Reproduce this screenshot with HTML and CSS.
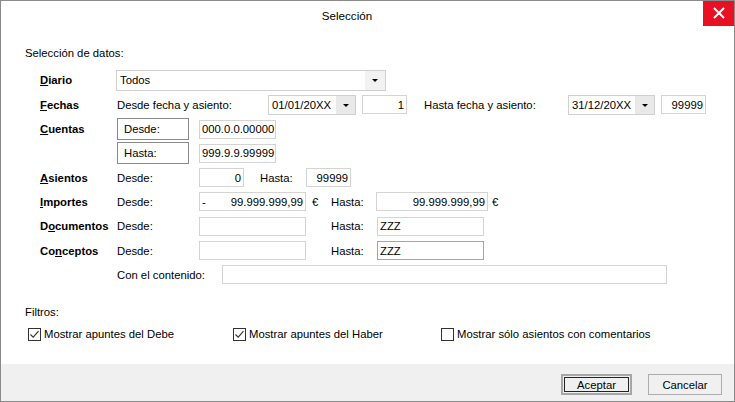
FILE: index.html
```html
<!DOCTYPE html>
<html lang="es">
<head>
<meta charset="utf-8">
<title>Selección</title>
<link rel="stylesheet" href="styles.css">
</head>
<body>
<div class="win">
  <div class="titlebar">
    <div class="title">Selección</div>
    <div class="close">
      <svg width="31" height="25" viewBox="0 0 31 25"><path d="M11 7 L21 17 M21 7 L11 17" stroke="#fff" stroke-width="2" fill="none"/></svg>
    </div>
  </div>
  <div class="content">
    <div class="heading">Selección de datos:</div>
    <div class="form">
      <div class="row">
        <span class="lbl"><u>D</u>iario</span>
        <div class="combo w-diario"><span class="val">Todos</span><span class="drop light"><i class="tri"></i></span></div>
      </div>
      <div class="row">
        <span class="lbl"><u>F</u>echas</span>
        <span class="txt w-fdesde">Desde fecha y asiento:</span>
        <div class="combo w-date1"><span class="val">01/01/20XX</span><span class="drop"><i class="tri"></i></span></div>
        <div class="inp num w-num ml6">1</div>
        <span class="txt w-fhasta ml17">Hasta fecha y asiento:</span>
        <div class="combo w-date2"><span class="val">31/12/20XX</span><span class="drop"><i class="tri"></i></span></div>
        <div class="inp num w-num ml6">99999</div>
      </div>
      <div class="row">
        <span class="lbl"><u>C</u>uentas</span>
        <div class="frame">Desde:</div>
        <div class="inp w-cta">000.0.0.00000</div>
      </div>
      <div class="row">
        <span class="lbl"></span>
        <div class="frame">Hasta:</div>
        <div class="inp w-cta">999.9.9.99999</div>
      </div>
      <div class="row">
        <span class="lbl"><u>A</u>sientos</span>
        <span class="txt w-desde">Desde:</span>
        <div class="inp num w-num">0</div>
        <span class="txt w-ahasta">Hasta:</span>
        <div class="inp num w-num">99999</div>
      </div>
      <div class="row">
        <span class="lbl"><u>I</u>mportes</span>
        <span class="txt w-desde">Desde:</span>
        <div class="inp num w-imp split"><span>-</span><span>99.999.999,99</span></div>
        <span class="txt w-euro">€</span>
        <span class="txt w-hasta2">Hasta:</span>
        <div class="inp num w-imp2">99.999.999,99</div>
        <span class="txt euro2">€</span>
      </div>
      <div class="row">
        <span class="lbl">D<u>o</u>cumentos</span>
        <span class="txt w-desde">Desde:</span>
        <div class="inp w-doc"></div>
        <span class="txt w-sp">Hasta:</span>
        <div class="inp w-doc">ZZZ</div>
      </div>
      <div class="row">
        <span class="lbl">Co<u>n</u>ceptos</span>
        <span class="txt w-desde">Desde:</span>
        <div class="inp w-doc"></div>
        <span class="txt w-sp">Hasta:</span>
        <div class="inp w-doc dark">ZZZ</div>
      </div>
      <div class="row">
        <span class="lbl"></span>
        <span class="txt w-cont">Con el contenido:</span>
        <div class="inp w-contin"></div>
      </div>
    </div>
    <div class="filtros">Filtros:</div>
    <div class="checks">
      <label class="chk c1"><span class="box"><svg width="11" height="11" viewBox="0 0 11 11"><path d="M1.5 5.5 L4.2 8.2 L9.5 2.2" stroke="#333" stroke-width="1.1" fill="none"/></svg></span>Mostrar apuntes del Debe</label>
      <label class="chk c2"><span class="box"><svg width="11" height="11" viewBox="0 0 11 11"><path d="M1.5 5.5 L4.2 8.2 L9.5 2.2" stroke="#333" stroke-width="1.1" fill="none"/></svg></span>Mostrar apuntes del Haber</label>
      <label class="chk c3"><span class="box"></span>Mostrar sólo asientos con comentarios</label>
    </div>
  </div>
  <div class="footer">
    <div class="btn default"><span class="focus">Aceptar</span></div>
    <div class="btn cancel">Cancelar</div>
  </div>
</div>
</body>
</html>
```

FILE: styles.css
```css
* { box-sizing: border-box; }
html, body { margin: 0; padding: 0; background: #fff; }
body {
  font-family: "Liberation Sans", Arial, sans-serif;
  font-size: 11.3px;
  color: #000;
}
.win {
  width: 735px;
  height: 402px;
  border: 1px solid #8a8a8a;
  display: flex;
  flex-direction: column;
  background: #fff;
  overflow: hidden;
}
.titlebar {
  display: flex;
  height: 33px;
  flex: none;
}
.title {
  flex: 1;
  text-align: center;
  padding-top: 8px;
  line-height: 14px;
  font-size: 11.6px;
  padding-right: 10px;
}
.close {
  width: 31px;
  height: 25px;
  background: #e81123;
  margin-right: 0;
}
.close svg { display: block; }
.content {
  padding-left: 24px;
  flex: 1;
}
.heading {
  margin-top: 12px;
  line-height: 14px;
}
.form {
  margin-top: 8.35px;
  padding-left: 15px;
}
.row {
  display: flex;
  align-items: center;
  height: 24.3px;
}
.lbl {
  width: 76px;
  flex: none;
  font-weight: bold;
}
.lbl u, .lbl { text-decoration-thickness: 1px; }
.txt { flex: none; white-space: nowrap; }
.combo {
  display: flex;
  align-items: stretch;
  border: 1px solid #d0d0d0;
  background: #fff;
  flex: none;
}
.combo .val {
  flex: 1;
  display: flex;
  align-items: center;
  padding-left: 3px;
}
.drop {
  width: 19px;
  background: #e9e9e9;
  display: flex;
  align-items: center;
  justify-content: center;
}
.drop.light { background: #f2f2f2; width: 20px; }
.tri {
  display: block;
  width: 0;
  height: 0;
  border-left: 3px solid transparent;
  border-right: 3px solid transparent;
  border-top: 3px solid #000;
  margin-top: 1px;
}
.w-diario { width: 270px; height: 21px; }
.w-date1 { width: 88px; height: 20px; margin-left: 0; }
.w-date2 { width: 87px; height: 20px; }
.w-fdesde { width: 152px; padding-left: 1px; }
.w-fhasta { width: 144px; }
.ml6 { margin-left: 6px; }
.ml17 { margin-left: 17px; }
.inp {
  flex: none;
  height: 19px;
  border: 1px solid #d4d4d4;
  background: #fff;
  display: flex;
  align-items: center;
  padding: 0 2px;
  white-space: nowrap;
}
.inp.num { justify-content: flex-end; }
.inp.split { justify-content: space-between; }
.inp.dark { border-color: #a5a5a5; }
.w-num { width: 45px; }
.frame {
  flex: none;
  width: 72px;
  height: 22px;
  margin-left: 1px;
  border: 1px solid #8a8a8a;
  display: flex;
  align-items: center;
  padding-left: 6px;
}
.w-cta { width: 77px; margin-left: 10px; }
.w-desde { width: 83px; padding-left: 1px; }
.w-ahasta { width: 46px; margin-left: 16px; }
.w-imp { width: 107px; }
.w-euro { width: 25px; padding-left: 6px; }
.w-hasta2 { width: 45px; }
.w-imp2 { width: 112px; }
.euro2 { margin-left: 4px; }
.w-doc { width: 107px; }
.w-sp { width: 71px; padding-left: 25px; }
.w-cont { width: 106px; padding-left: 1px; }
.w-contin { width: 445px; }
.filtros {
  margin-top: 18px;
  line-height: 14px;
}
.checks {
  display: flex;
  align-items: center;
  height: 16px;
  margin-top: 7px;
  padding-left: 3px;
}
.chk {
  display: flex;
  align-items: center;
  flex: none;
  white-space: nowrap;
}
.c1 { width: 205px; }
.c2 { width: 208px; }
.box {
  width: 13px;
  height: 13px;
  border: 1px solid #333;
  background: #fff;
  margin-right: 3px;
  display: flex;
  align-items: center;
  justify-content: center;
}
.box svg { display: block; }
.footer {
  flex: none;
  height: 37px;
  background: #f0f0f0;
  display: flex;
  justify-content: flex-end;
  padding-top: 10px;
  padding-right: 12px;
}
.btn {
  height: 21px;
  background: #f0f0f0;
  display: flex;
  align-items: center;
  justify-content: center;
}
.default {
  width: 71px;
  border: 2px solid #a6a6a6;
  padding: 1px;
  margin-right: 16px;
}
.default .focus {
  display: flex;
  align-items: center;
  justify-content: center;
  width: 100%;
  height: 100%;
  border: 1px solid #222;
}
.cancel {
  width: 74px;
  border: 1px solid #adadad;
}
```
